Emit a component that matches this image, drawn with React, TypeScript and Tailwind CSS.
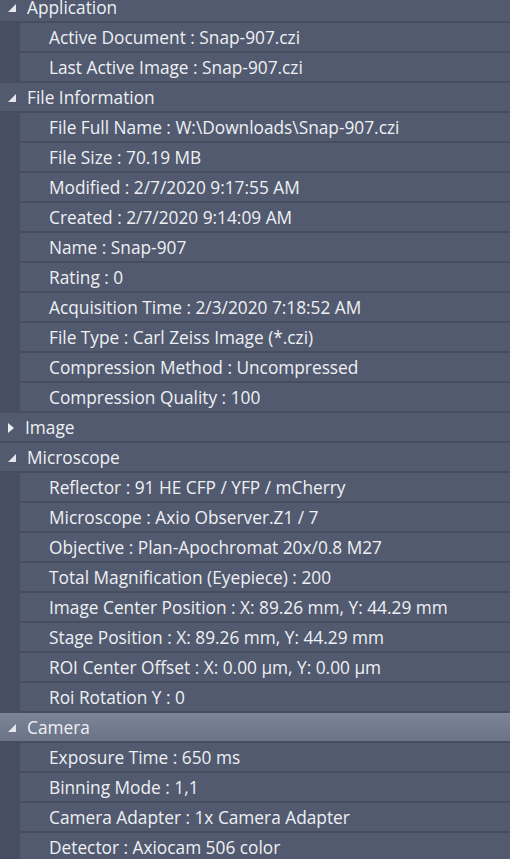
import React from "react";

type Group = { title: string; open: boolean; active?: boolean; items: string[] };

const groups: Group[] = [
  { title: "Application", open: true, items: ["Active Document : Snap-907.czi", "Last Active Image : Snap-907.czi"] },
  {
    title: "File Information",
    open: true,
    items: [
      "File Full Name : W:\\Downloads\\Snap-907.czi",
      "File Size : 70.19 MB",
      "Modified : 2/7/2020 9:17:55 AM",
      "Created : 2/7/2020 9:14:09 AM",
      "Name : Snap-907",
      "Rating : 0",
      "Acquisition Time : 2/3/2020 7:18:52 AM",
      "File Type : Carl Zeiss Image (*.czi)",
      "Compression Method : Uncompressed",
      "Compression Quality : 100",
    ],
  },
  { title: "Image", open: false, items: [] },
  {
    title: "Microscope",
    open: true,
    items: [
      "Reflector : 91 HE CFP / YFP / mCherry",
      "Microscope : Axio Observer.Z1 / 7",
      "Objective : Plan-Apochromat 20x/0.8 M27",
      "Total Magnification (Eyepiece) : 200",
      "Image Center Position : X: 89.26 mm, Y: 44.29 mm",
      "Stage Position : X: 89.26 mm, Y: 44.29 mm",
      "ROI Center Offset : X: 0.00 µm, Y: 0.00 µm",
      "Roi Rotation Y : 0",
    ],
  },
  {
    title: "Camera",
    open: true,
    active: true,
    items: ["Exposure Time : 650 ms", "Binning Mode : 1,1", "Camera Adapter : 1x Camera Adapter", "Detector : Axiocam 506 color"],
  },
];

function Arrow({ open }: { open: boolean }) {
  if (open) {
    return (
      <svg width="8" height="8" viewBox="0 0 8 8" className="shrink-0">
        <polygon points="8,0 8,8 0,8" fill="#e4e6ec" />
      </svg>
    );
  }
  return (
    <svg width="6" height="10" viewBox="0 0 6 10" className="shrink-0">
      <polygon points="0,0 6,5 0,10" fill="#eceef2" />
    </svg>
  );
}

export default function App() {
  return (
    <div
      className="w-[510px] h-[859px] overflow-hidden bg-[#525a6f] text-[#eef0f4] text-[17.3px]"
      style={{ fontFamily: '"Open Sans", "Noto Sans", sans-serif' }}
    >
      <div className="-mt-[7px]">
        {groups.map((g) => (
          <div key={g.title}>
            <div
              className={
                "h-[30px] flex items-center gap-[11px] pl-[8px] pt-[2px] border-b-2 border-[#464d5f] " +
                (g.active ? "bg-gradient-to-b from-[#7c8498] to-[#6b7387]" : "bg-[#525a6f]")
              }
            >
              <Arrow open={g.open} />
              <span className="leading-none">{g.title}</span>
            </div>
            {g.items.map((it) => (
              <div key={it} className="h-[30px] flex">
                <div className="w-[20px] shrink-0 bg-[#474e62]" />
                <div className="flex-1 flex items-center pl-[29px] pt-[2px] border-b-2 border-[#464d5f] whitespace-nowrap">
                  {it}
                </div>
              </div>
            ))}
          </div>
        ))}
      </div>
    </div>
  );
}
